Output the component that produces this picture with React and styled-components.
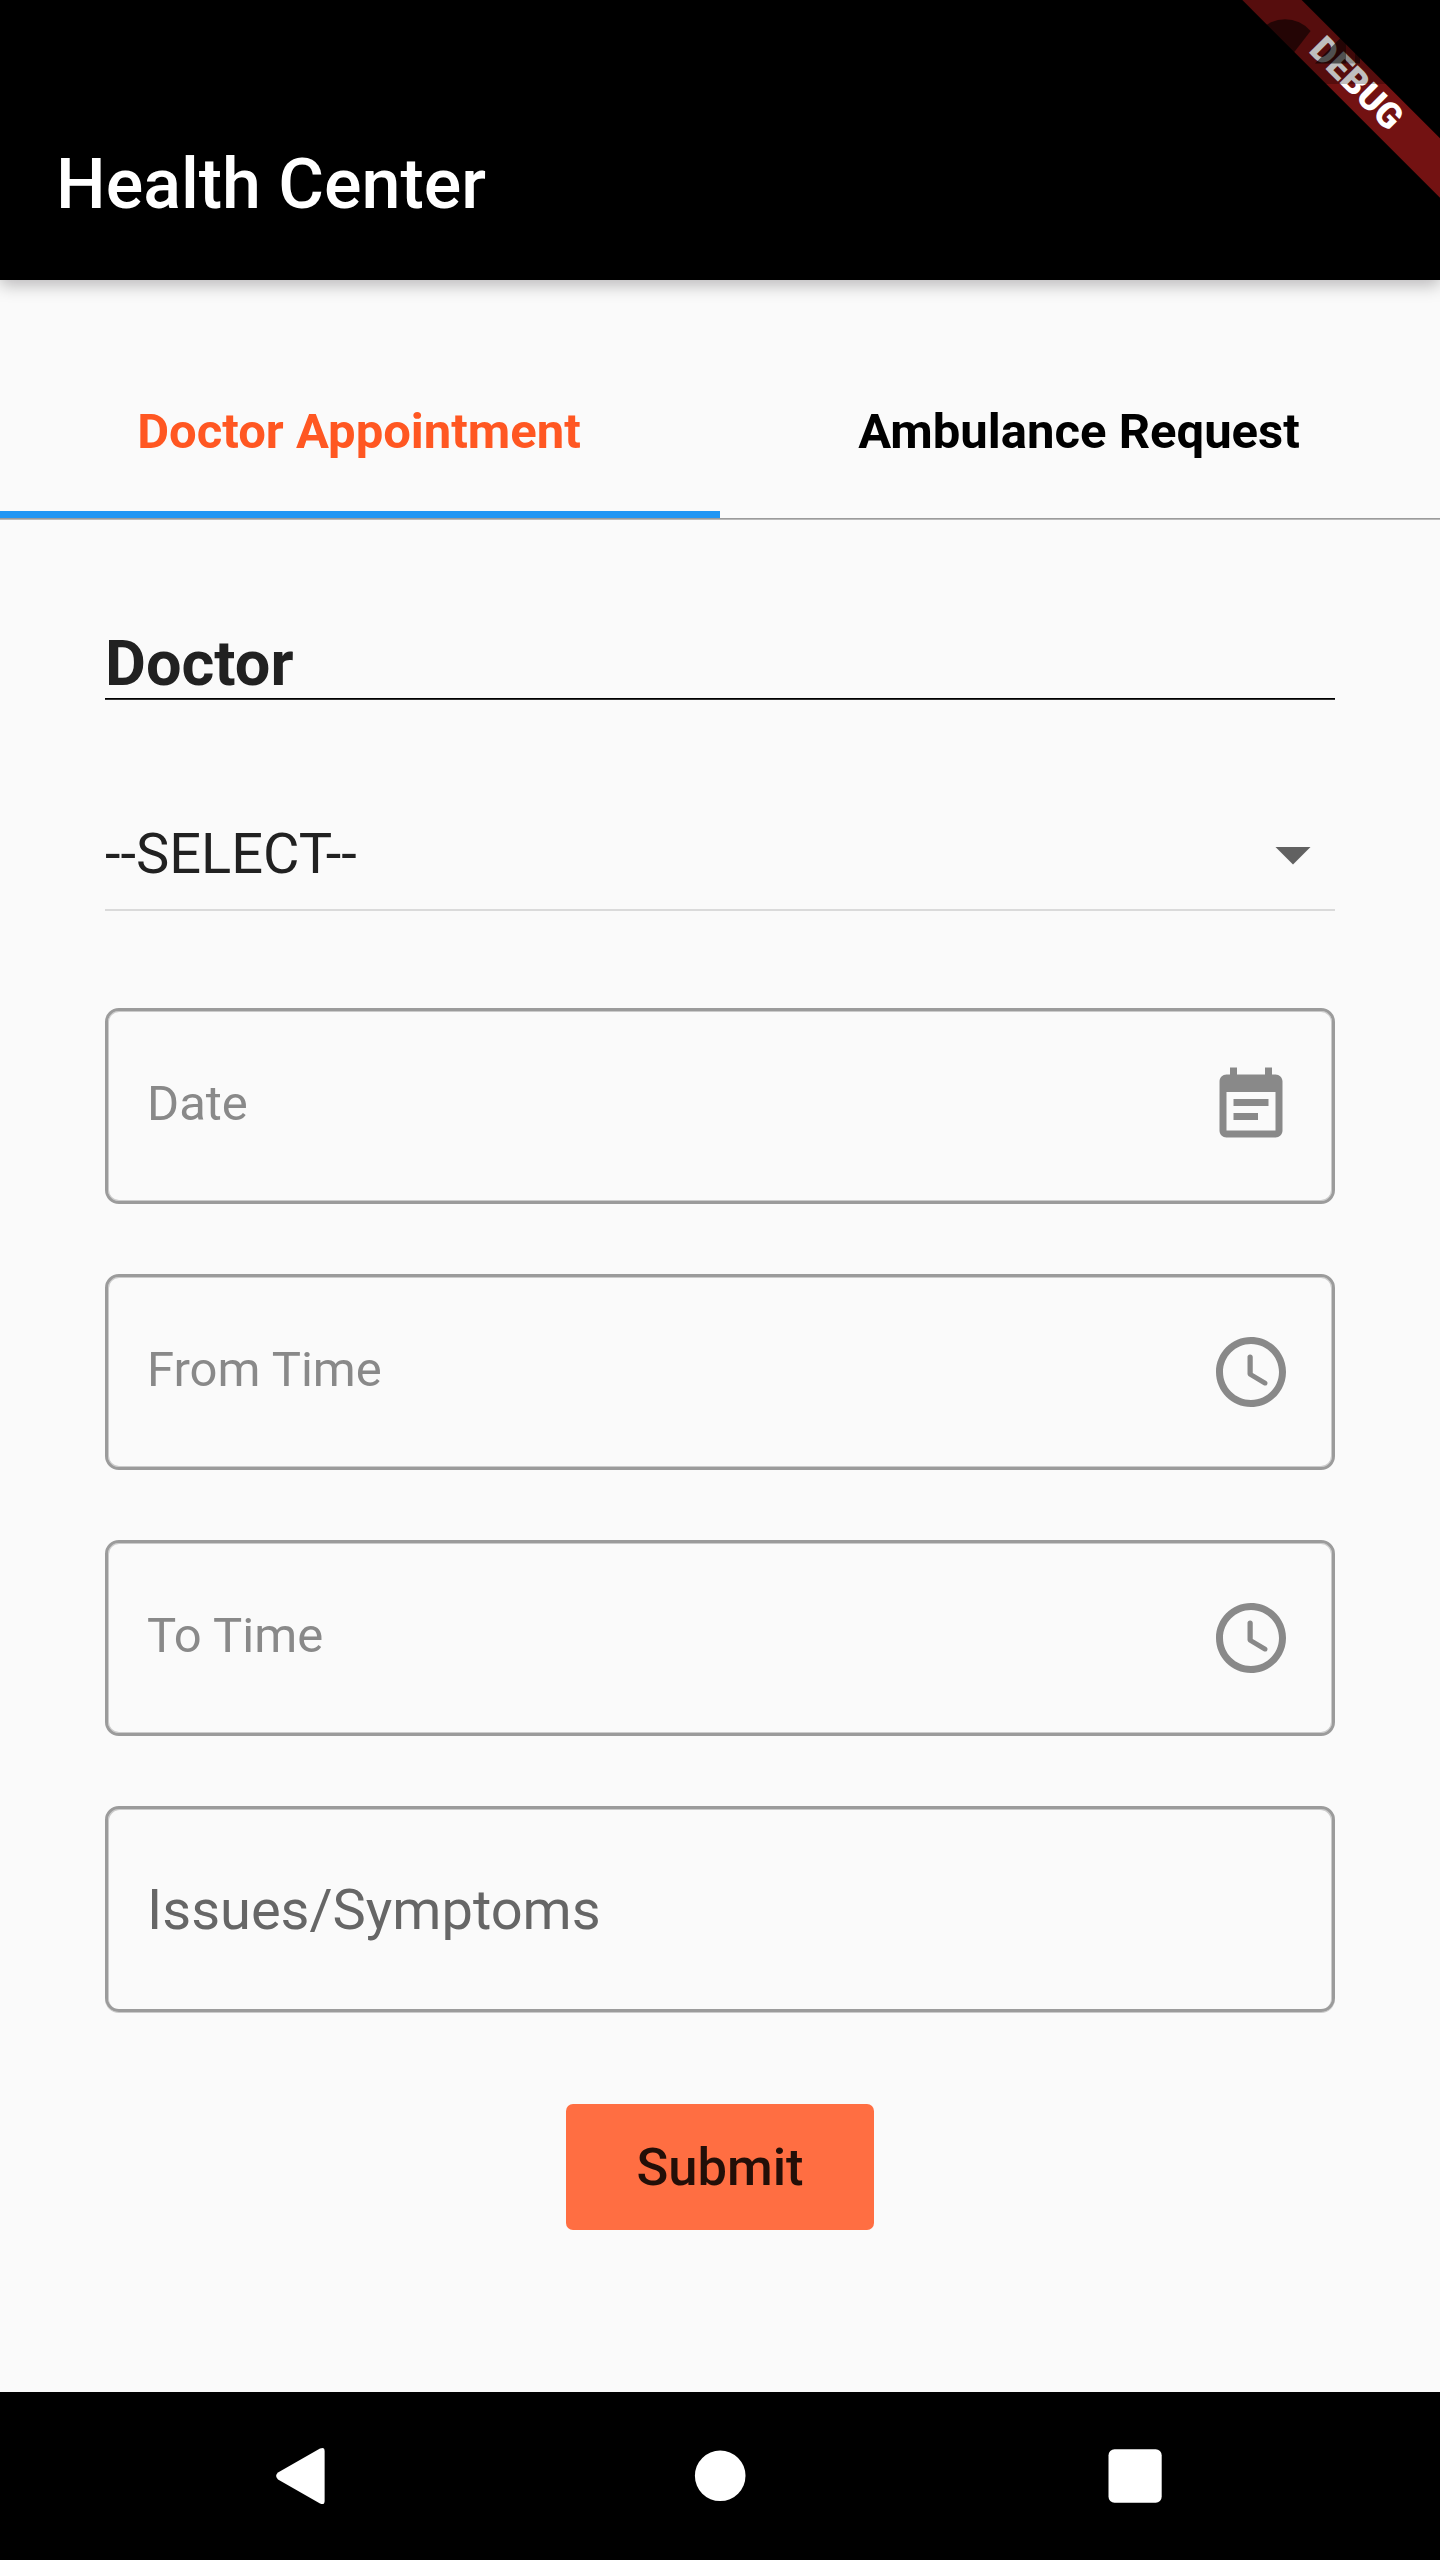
import React from "react";
import styled, { createGlobalStyle } from "styled-components";

const GlobalStyle = createGlobalStyle`
  *, *::before, *::after { box-sizing: border-box; }
  body {
    margin: 0;
    background: #fafafa;
    font-family: Roboto, "Liberation Sans", sans-serif;
  }
`;

const Screen = styled.div`
  position: relative;
  display: flex;
  flex-direction: column;
  width: 1440px;
  height: 2560px;
  overflow: hidden;
  background: #fafafa;
`;

const AppBar = styled.header`
  flex: none;
  display: flex;
  align-items: center;
  height: 280px;
  padding: 88px 56px 0;
  background: #000;
  box-shadow: 0 5px 16px rgba(8, 0, 8, 0.27);
`;

const Title = styled.h1`
  margin: 0;
  font-size: 70px;
  font-weight: 500;
  line-height: 82px;
  color: #fff;
`;

const TabBar = styled.nav`
  flex: none;
  display: grid;
  grid-template-columns: 1fr 1fr;
  margin-top: 66px;
  border-bottom: 1px solid #9b9b9b;
  box-shadow: 0 1px 0 #b9b9b9;
`;

const Tab = styled.a`
  display: flex;
  align-items: center;
  justify-content: center;
  height: 172px;
  border-bottom: 7px solid ${(p) => (p.$active ? "#2196f3" : "transparent")};
  padding: 6px 2px 0 0;
  font-size: 49px;
  font-weight: 700;
  line-height: 57px;
  color: ${(p) => (p.$active ? "#ff5722" : "#000")};
`;

const Form = styled.form`
  flex: 1;
  display: flex;
  flex-direction: column;
  padding: 111px 105px 0;
`;

const SectionTitle = styled.h2`
  margin: 0 0 113px;
  height: 69px;
  border-bottom: 1px solid #000;
  box-shadow: 0 1px 0 #333;
  font-size: 63px;
  font-weight: 700;
  line-height: 68px;
  color: #212121;
`;

const Select = styled.div`
  display: flex;
  align-items: center;
  justify-content: space-between;
  height: 99px;
  margin-bottom: 97px;
  padding-bottom: 13px;
  border-bottom: 2px solid #dadada;
  font-size: 56px;
  line-height: 66px;
  color: #212121;
`;

const Fields = styled.div`
  display: flex;
  flex-direction: column;
  gap: 70px;
`;

const Field = styled.label`
  display: flex;
  align-items: center;
  justify-content: space-between;
  height: ${(p) => (p.$large ? 206 : 196)}px;
  padding: 0 39px;
  border: 3px solid #9b9b9b;
  border-radius: 14px;
  box-shadow: ${(p) =>
    p.$large
      ? "inset 1px 1px 0 #cbcbcb, inset -1px 1px 0 #cbcbcb, 0 1px 0 #cbcbcb"
      : "inset 0 0 0 1px #cbcbcb"};
`;

const FieldText = styled.span`
  padding: ${(p) => (p.$large ? "2px 0 0" : "0 0 6px")};
  font-size: ${(p) => (p.$large ? 56 : 49)}px;
  line-height: ${(p) => (p.$large ? 66 : 57)}px;
  color: ${(p) => (p.$large ? "#666" : "#898989")};
`;

const Icon = styled.svg`
  flex: none;
  display: block;
  width: 84px;
  height: 84px;
  fill: ${(p) => p.$color || "#898989"};
`;

const SubmitButton = styled.button`
  align-self: center;
  width: 308px;
  height: 126px;
  margin-top: 91.5px;
  padding: 0;
  border: 0;
  border-radius: 7px;
  background: #ff6e42;
  font: 500 52.5px/62px Roboto, "Liberation Sans", sans-serif;
  color: #240f08;
`;

const NavBar = styled.footer`
  flex: none;
  display: grid;
  grid-template-columns: 600px 240px 589px;
  place-items: center;
  height: 168px;
  background: #000;
`;

const BannerCorner = styled.div`
  position: absolute;
  top: 0;
  right: 0;
  width: 210px;
  height: 210px;
  overflow: hidden;
`;

const Ribbon = styled.div`
  position: absolute;
  top: 63px;
  left: -14px;
  width: 280px;
  height: 42px;
  transform: rotate(45deg);
  background: #731212;
  font-size: 35.7px;
  font-weight: 900;
  line-height: 40px;
  text-align: center;
  color: #fff;
`;

const StatusShade = styled.svg`
  position: absolute;
  top: 0;
  left: 0;
  width: 210px;
  height: 84px;
`;

const CalendarIcon = () => (
  <Icon viewBox="0 0 24 24">
    <path d="M17 10H7v2h10v-2zm2-7h-1V1h-2v2H8V1H6v2H5c-1.11 0-1.99.9-1.99 2L3 19c0 1.1.89 2 2 2h14c1.1 0 2-.9 2-2V5c0-1.1-.9-2-2-2zm0 16H5V8h14v11zm-5-5H7v2h7v-2z" />
  </Icon>
);

const ClockIcon = () => (
  <Icon viewBox="0 0 24 24">
    <path d="M11.99 2C6.47 2 2 6.48 2 12s4.47 10 9.99 10C17.52 22 22 17.52 22 12S17.52 2 11.99 2zM12 20c-4.42 0-8-3.58-8-8s3.58-8 8-8 8 3.58 8 8-3.58 8-8 8z" />
    <path d="M11.78 7h-.06c-.4 0-.72.32-.72.72v4.72c0 .35.18.68.49.86l4.15 2.49c.34.2.78.1.98-.24.21-.34.1-.79-.25-.99l-3.87-2.3V7.72c0-.4-.32-.72-.72-.72z" />
  </Icon>
);

const fields = [
  { label: "Date", icon: CalendarIcon },
  { label: "From Time", icon: ClockIcon },
  { label: "To Time", icon: ClockIcon },
  { label: "Issues/Symptoms", large: true },
];

export default function App() {
  return (
    <>
      <GlobalStyle />
      <Screen>
        <AppBar>
          <Title>Health Center</Title>
        </AppBar>
        <TabBar>
          <Tab $active>Doctor Appointment</Tab>
          <Tab>Ambulance Request</Tab>
        </TabBar>
        <Form>
          <SectionTitle>Doctor</SectionTitle>
          <Select>
            <span>--SELECT--</span>
            <Icon viewBox="0 0 24 24" $color="#616161">
              <path d="M7 10l5 5 5-5z" />
            </Icon>
          </Select>
          <Fields>
            {fields.map(({ label, icon: FieldIcon, large }) => (
              <Field key={label} $large={large}>
                <FieldText $large={large}>{label}</FieldText>
                {FieldIcon && <FieldIcon />}
              </Field>
            ))}
          </Fields>
          <SubmitButton type="button">Submit</SubmitButton>
        </Form>
        <NavBar>
          <Icon viewBox="0 0 84 84" $color="#fff">
            <path d="M20 38.6 62 14.6Q66.6 12.4 66.6 17V67Q66.6 71.6 62 69.4L20 45.4Q16.2 42 20 38.6Z" />
          </Icon>
          <Icon viewBox="0 0 84 84" $color="#fff">
            <circle cx="42.2" cy="41.8" r="25.3" />
          </Icon>
          <Icon viewBox="0 0 84 84" $color="#fff">
            <rect x="15.5" y="15.3" width="53.2" height="53.4" rx="6" />
          </Icon>
        </NavBar>
        <BannerCorner>
          <Ribbon>DEBUG</Ribbon>
          <StatusShade viewBox="0 0 210 84">
            <rect width="210" height="84" fill="#000" fillOpacity="0.25" />
            <path d="M55 64 29.5 31A33.6 33.6 0 0 1 80.6 31Z" fill="#000" fillOpacity="0.58" />
            <path d="M85 63.5 116 32.5V63.5Z" fill="#000" fillOpacity="0.58" />
            <path d="M116 43H125V63.5H116Z" fill="#000" fillOpacity="0.25" />
            <path d="M125 52H130V63.5H125Z" fill="#000" fillOpacity="0.58" />
          </StatusShade>
        </BannerCorner>
      </Screen>
    </>
  );
}
